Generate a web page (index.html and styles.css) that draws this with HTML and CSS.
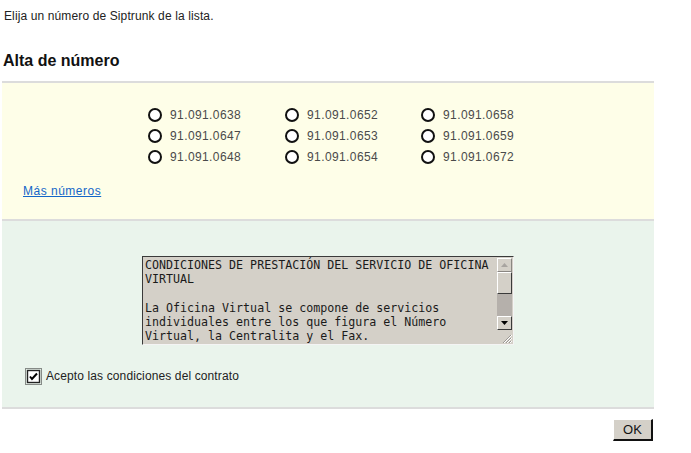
FILE: index.html
```html
<!DOCTYPE html>
<html lang="es">
<head>
<meta charset="utf-8">
<title>Alta de número</title>
<link rel="stylesheet" href="styles.css">
</head>
<body>
<p class="intro">Elija un número de Siptrunk de la lista.</p>
<h2 class="title">Alta de número</h2>
<form class="panel">
  <section class="numbers">
    <div class="radio-grid">
      <label class="radio"><span class="dot"></span>91.091.0638</label>
      <label class="radio"><span class="dot"></span>91.091.0652</label>
      <label class="radio"><span class="dot"></span>91.091.0658</label>
      <label class="radio"><span class="dot"></span>91.091.0647</label>
      <label class="radio"><span class="dot"></span>91.091.0653</label>
      <label class="radio"><span class="dot"></span>91.091.0659</label>
      <label class="radio"><span class="dot"></span>91.091.0648</label>
      <label class="radio"><span class="dot"></span>91.091.0654</label>
      <label class="radio"><span class="dot"></span>91.091.0672</label>
    </div>
    <a class="more" href="#">Más números</a>
  </section>
  <section class="terms">
    <div class="textarea">
      <div class="ta-text">CONDICIONES DE PRESTACIÓN DEL SERVICIO DE OFICINA VIRTUAL

La Oficina Virtual se compone de servicios individuales entre los que figura el Número Virtual, la Centralita y el Fax.</div>
      <div class="scrollbar">
        <span class="sb-btn sb-up"><svg width="7" height="4" viewBox="0 0 7 4"><path d="M0 4 L3.5 0 L7 4 Z" fill="#a8a4a0"/></svg></span>
        <span class="sb-thumb"></span>
        <span class="sb-track"></span>
        <span class="sb-btn sb-down"><svg width="7" height="4" viewBox="0 0 7 4"><path d="M0 0 L7 0 L3.5 4 Z" fill="#000"/></svg></span>
        <span class="sb-grip"><svg width="12" height="12" viewBox="0 0 12 12"><path d="M11 3 L3 11 M11 6 L6 11 M11 9 L9 11" stroke="#9a9692" stroke-width="1"/><path d="M12 3 L4 11 M12 6 L7 11 M12 9 L10 11" stroke="#fff" stroke-width="1"/></svg></span>
      </div>
    </div>
    <label class="accept">
      <span class="check"><svg width="17" height="17" viewBox="0 0 17 17"><rect x="0.5" y="0.5" width="16" height="16" fill="none" stroke="#222" stroke-dasharray="1 1"/><rect x="2.5" y="2.5" width="12" height="12" fill="#fff" stroke="#222" stroke-width="1.4"/><path d="M5 8.5 L7 11 L12 5.5" fill="none" stroke="#000" stroke-width="2"/></svg></span>
      Acepto las condiciones del contrato
    </label>
  </section>
</form>
<div class="actions"><button class="ok" type="button">OK</button></div>
</body>
</html>
```
FILE: styles.css
```css
html, body {
  margin: 0;
  padding: 0;
  background: #fff;
}
body {
  font-family: "Liberation Sans", Arial, sans-serif;
  font-size: 12px;
  color: #222;
}
.intro {
  margin: 9px 0 0 4px;
  line-height: 14px;
  letter-spacing: 0.12px;
}
.title {
  margin: 28px 0 0 3px;
  font-size: 16px;
  line-height: 19px;
  font-weight: bold;
  color: #111;
}
.panel {
  margin: 11px 0 0 2px;
  width: 652px;
  display: flex;
  flex-direction: column;
}
.numbers {
  border-top: 2px solid #dcdcdc;
  background: #fefee8;
  padding: 21px 0 21px 21px;
  display: flex;
  flex-direction: column;
}
.radio-grid {
  display: grid;
  grid-template-columns: 137px 136px 100px;
  grid-auto-rows: 21px;
  margin-left: 125px;
}
.radio {
  display: flex;
  align-items: center;
  gap: 8px;
  color: #4a4a4a;
  letter-spacing: 0.4px;
  line-height: 14px;
}
.dot {
  width: 10px;
  height: 10px;
  border: 2px solid #111;
  border-radius: 50%;
  background: #fff;
  flex: none;
}
.more {
  margin-top: 17px;
  align-self: flex-start;
  color: #1466c8;
  text-decoration: underline;
  line-height: 14px;
  letter-spacing: 0.5px;
}
.terms {
  border-top: 2px solid #dcdcdc;
  border-bottom: 2px solid #dcdcdc;
  background: #eaf4ec;
  padding: 35px 0 22px 23px;
  display: flex;
  flex-direction: column;
}
.textarea {
  align-self: center;
  margin-left: -23px;
  width: 372px;
  height: 89px;
  box-sizing: border-box;
  border: 1px solid;
  border-color: #3a3a3a #f4f4f4 #f4f4f4 #3a3a3a;
  background: #d4d0c8;
  display: flex;
  overflow: hidden;
}
.ta-text {
  flex: 1;
  padding: 1px 2px;
  font-family: "DejaVu Sans Mono", monospace;
  font-size: 11.65px;
  line-height: 14.2px;
  color: #1a1a1a;
  white-space: pre-wrap;
  overflow: hidden;
}
.scrollbar {
  width: 15px;
  margin: 1px 1px 0 0;
  display: flex;
  flex-direction: column;
}
.sb-btn, .sb-thumb {
  box-sizing: border-box;
  background: #d4d0c8;
  border: 1px solid;
  border-color: #fff #3a3a3a #3a3a3a #fff;
  display: flex;
  align-items: center;
  justify-content: center;
}
.sb-btn {
  height: 14px;
}
.sb-up {
  border-color: #fff #8a8682 #8a8682 #fff;
}
.sb-thumb {
  height: 22px;
}
.sb-track {
  height: 22px;
  background: #b5b0ab;
}
.sb-grip {
  flex: 1;
  display: flex;
  align-items: flex-end;
  justify-content: flex-end;
}
.accept {
  margin-top: 23px;
  display: flex;
  align-items: center;
  gap: 4px;
  line-height: 17px;
  color: #222;
  letter-spacing: 0.12px;
}
.check {
  display: flex;
  width: 17px;
  height: 17px;
}
.actions {
  margin: 10px 0 0 2px;
  width: 651px;
  display: flex;
  justify-content: flex-end;
}
.ok {
  width: 40px;
  height: 22px;
  box-sizing: border-box;
  background: #d4d0c8;
  border: 1px solid;
  border-color: #fff #111 #111 #fff;
  border-width: 1px 2px 2px 1px;
  font-family: "Liberation Sans", Arial, sans-serif;
  font-size: 13px;
  color: #111;
  padding: 0;
}
```
